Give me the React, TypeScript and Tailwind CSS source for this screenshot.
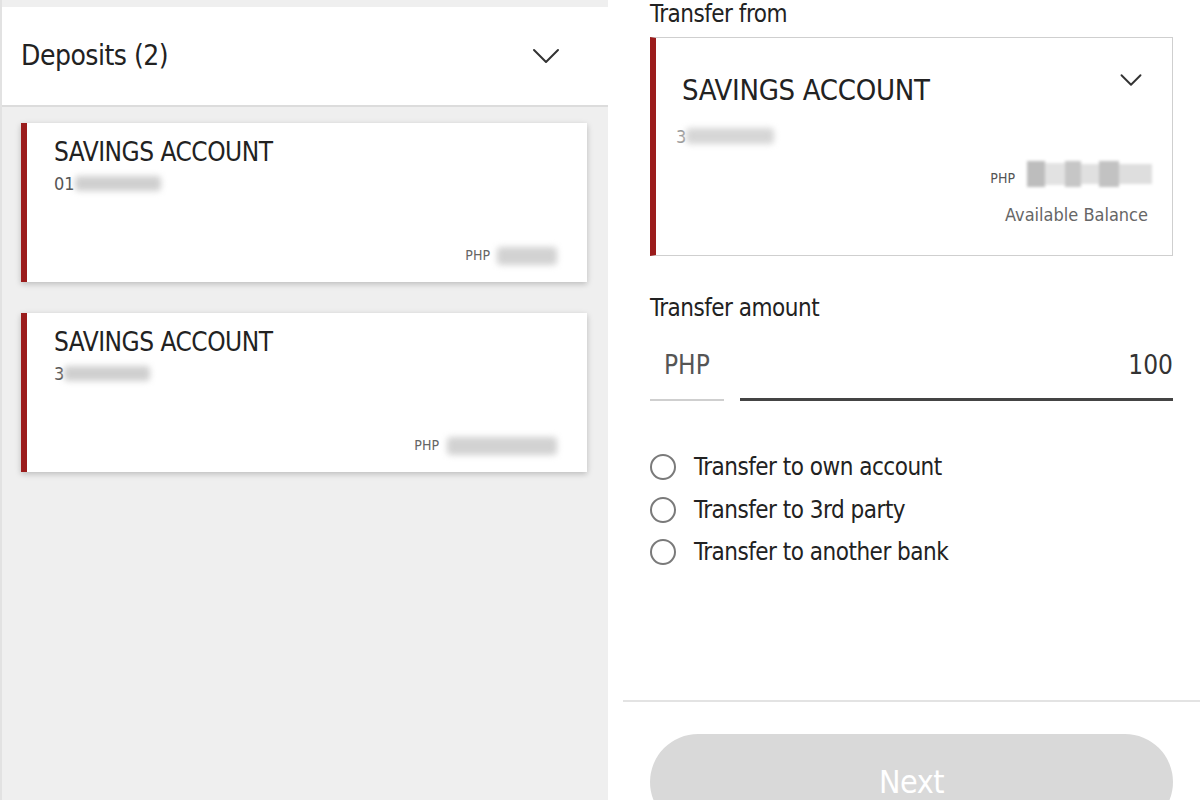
import { ChevronDown } from 'lucide-react'

const font = { fontFamily: '"Liberation Sans Narrow", "DejaVu Sans Condensed", "Liberation Sans", sans-serif' }

// blurred block standing in for a masked number
function Masked({ w, h, tone = 'bg-[#cfcfcf]' }: { w: string; h: string; tone?: string }) {
  return <span className={`inline-block ${w} ${h} ${tone} blur-[3px] rounded-sm`} />
}

function DepositCard({ prefix, amountWidth, phpGap }: { prefix: string; amountWidth: string; phpGap: string }) {
  return (
    <div className="h-[159px] bg-white border-l-[6px] border-[#9b1c1c] shadow-[0_2px_6px_rgba(0,0,0,0.22)] pl-[27px] pr-[30px] pt-[13px] flex flex-col">
      <div className="text-[26px] leading-[32px] text-[#222] tracking-[-0.5px]">SAVINGS ACCOUNT</div>
      <div className="flex items-center mt-[4px] h-[22px]">
        <span className="text-[18px] text-[#555]">{prefix}</span>
        <Masked w="w-[86px]" h="h-[15px]" />
      </div>
      <div className={`mt-auto mb-[16px] flex items-center justify-end ${phpGap}`}>
        <span className="text-[14px] text-[#666]">PHP</span>
        <Masked w={amountWidth} h="h-[18px]" tone="bg-[#d2d2d2]" />
      </div>
    </div>
  )
}

function Radio({ label }: { label: string }) {
  return (
    <div className="h-[42.5px] flex items-center gap-[18px]">
      <span className="w-[26px] h-[26px] rounded-full border-2 border-[#7a7a7a]" />
      <span className="text-[24px] leading-[32px] text-[#222] tracking-[-0.5px]">{label}</span>
    </div>
  )
}

export default function App() {
  return (
    <div className="w-[1200px] h-[800px] overflow-hidden flex bg-white" style={font}>
      {/* left: deposits list */}
      <div className="w-[608px] h-full bg-[#efefef] pt-[7px] border-l-2 border-[#e2e2e2]">
        <div className="h-[100px] bg-white border-b-2 border-[#dcdcdc] flex items-center justify-between pl-[19px] pr-[38px]">
          <span className="text-[28px] text-[#222] tracking-[-0.5px]">Deposits (2)</span>
          <ChevronDown className="w-[48px] h-[48px] text-[#333]" strokeWidth={1} />
        </div>
        <div className="pl-[19px] pr-[21px] pt-[16px] flex flex-col gap-[31px]">
          <DepositCard prefix="01" amountWidth="w-[60px]" phpGap="gap-[7px]" />
          <DepositCard prefix="3" amountWidth="w-[110px]" phpGap="gap-[8px]" />
        </div>
      </div>

      {/* right: transfer form */}
      <div className="flex-1 h-full flex flex-col">
        <div className="pl-[42px] pr-[27px] flex flex-col">
          <div className="text-[24px] leading-[32px] text-[#222] tracking-[-0.5px] -mt-[2px]">Transfer from</div>
          <div className="mt-[7px] h-[219px] border border-[#cfcfcf] border-l-[6px] border-l-[#9b1c1c] pl-[26px] pr-[24px] pt-[34px] flex flex-col">
            <div className="flex items-start justify-between h-[36px]">
              <span className="text-[29px] leading-[36px] text-[#222] tracking-[-0.3px]">SAVINGS ACCOUNT</span>
              <ChevronDown className="w-[38px] h-[38px] text-[#333] -mr-[2px] -mt-[11px]" strokeWidth={1.2} />
            </div>
            <div className="flex items-center mt-[17px] h-[22px] -ml-[6px]">
              <span className="text-[18px] text-[#999]">3</span>
              <Masked w="w-[88px]" h="h-[16px]" tone="bg-[#d6d6d6]" />
            </div>
            <div className="flex items-center justify-end gap-[12px] mt-[10px] -mr-[4px]">
              <span className="text-[14px] text-[#555] mt-[8px]">PHP</span>
              <span className="flex items-center h-[34px] w-[125px] blur-[1.5px]">
                <span className="w-[18px] h-[26px] bg-[#bdbdbd]" />
                <span className="w-[20px] h-[22px] bg-[#e2e2e2]" />
                <span className="w-[16px] h-[26px] bg-[#c6c6c6]" />
                <span className="w-[18px] h-[20px] bg-[#e0e0e0]" />
                <span className="w-[20px] h-[26px] bg-[#c2c2c2]" />
                <span className="w-[33px] h-[20px] bg-[#dedede]" />
              </span>
            </div>
            <div className="text-right text-[18px] text-[#666] mt-[10px]">Available Balance</div>
          </div>

          <div className="text-[24px] leading-[32px] text-[#222] tracking-[-0.5px] mt-[36px]">Transfer amount</div>
          <div className="flex items-end mt-[25px]">
            <div className="w-[74px] border-b-2 border-[#cfcfcf] pl-[14px] pb-[18px] text-[26px] leading-[32px] text-[#555]">PHP</div>
            <div className="flex-1 ml-[16px] border-b-[3px] border-[#444] pb-[17px] text-right text-[26px] leading-[32px] text-[#333]">100</div>
          </div>

          <div className="mt-[45px] flex flex-col">
            <Radio label="Transfer to own account" />
            <Radio label="Transfer to 3rd party" />
            <Radio label="Transfer to another bank" />
          </div>
        </div>

        <div className="mt-auto ml-[15px] border-t-2 border-[#e3e3e3] h-[100px] pl-[27px] pr-[27px] pt-[32px]">
          <div className="h-[96px] rounded-full bg-[#d9d9d9] flex items-center justify-center">
            <span className="text-[32px] text-white tracking-[-0.5px]">Next</span>
          </div>
        </div>
      </div>
    </div>
  )
}
